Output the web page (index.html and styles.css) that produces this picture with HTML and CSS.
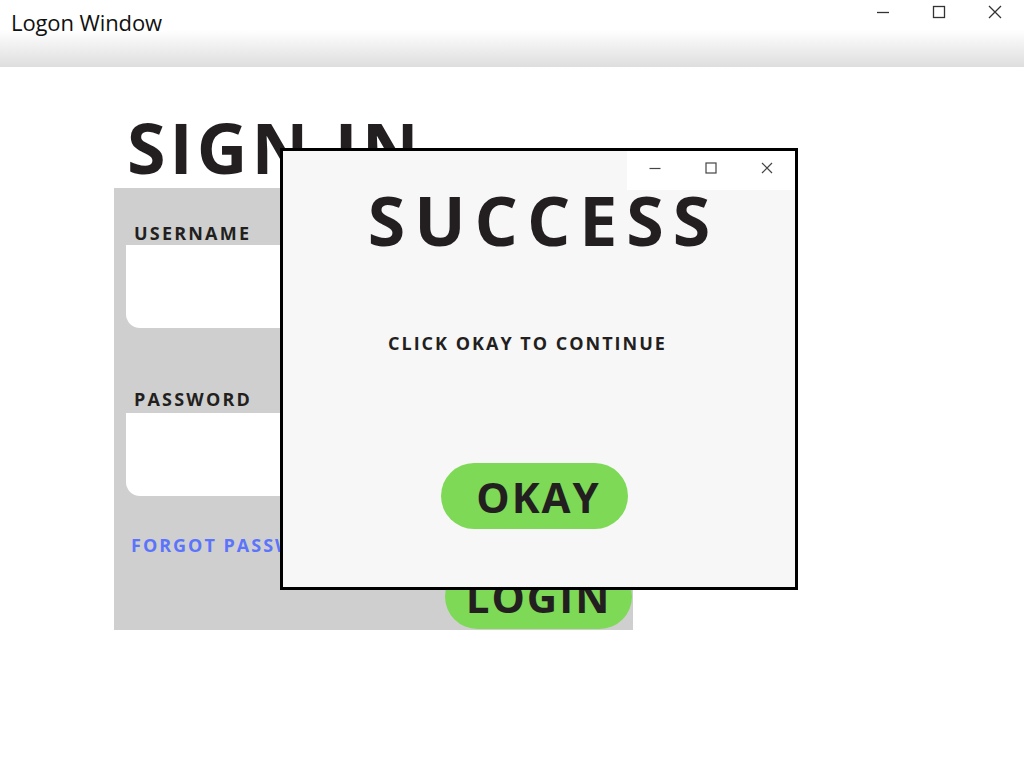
FILE: index.html
```html
<!DOCTYPE html>
<html lang="en">
<head>
<meta charset="utf-8">
<title>Logon Window</title>
<link rel="stylesheet" href="styles.css">
</head>
<body>
<div class="window">
  <header class="titlebar">
    <div class="title">Logon Window</div>
    <div class="controls">
      <span class="ctl"><svg width="14" height="14" viewBox="0 0 14 14"><path d="M1 7.5H13" stroke="#333" stroke-width="1.3" fill="none"/></svg></span>
      <span class="ctl"><svg width="14" height="14" viewBox="0 0 14 14"><rect x="1.5" y="1.5" width="11" height="11" stroke="#333" stroke-width="1.3" fill="none"/></svg></span>
      <span class="ctl"><svg width="14" height="14" viewBox="0 0 14 14"><path d="M1 1L13 13M13 1L1 13" stroke="#333" stroke-width="1.3" fill="none"/></svg></span>
    </div>
  </header>

  <main class="content">
    <h1 class="heading">SIGN IN</h1>
    <section class="panel">
      <label class="label label-user">USERNAME</label>
      <div class="field"></div>
      <label class="label label-pass">PASSWORD</label>
      <div class="field field-pass"></div>
      <a class="forgot">FORGOT PASSWORD?</a>
      <button class="btn btn-login">LOGIN</button>
    </section>
  </main>

  <div class="dialog">
    <div class="dlg-controls">
      <span class="dctl"><svg width="12" height="12" viewBox="0 0 12 12"><path d="M0.5 6.5H11.5" stroke="#444" stroke-width="1.2" fill="none"/></svg></span>
      <span class="dctl"><svg width="12" height="12" viewBox="0 0 12 12"><rect x="1" y="1" width="10" height="10" stroke="#444" stroke-width="1.2" fill="none"/></svg></span>
      <span class="dctl"><svg width="12" height="12" viewBox="0 0 12 12"><path d="M1 1L11 11M11 1L1 11" stroke="#444" stroke-width="1.2" fill="none"/></svg></span>
    </div>
    <h2 class="dlg-title">SUCCESS</h2>
    <p class="dlg-text">CLICK OKAY TO CONTINUE</p>
    <button class="btn btn-okay">OKAY</button>
  </div>
</div>
</body>
</html>
```

FILE: styles.css
```css
* { box-sizing: border-box; }

html, body {
  margin: 0;
  padding: 0;
  background: #ffffff;
}

body {
  font-family: "Open Sans", "Liberation Sans", sans-serif;
  color: #231f20;
  width: 1024px;
  height: 768px;
  overflow: hidden;
}

.window {
  position: relative;
  width: 1024px;
  height: 768px;
}

.titlebar {
  height: 67px;
  display: flex;
  justify-content: space-between;
  align-items: flex-start;
  background: linear-gradient(to bottom, #ffffff 0px, #ffffff 30px, #f1f1f1 45px, #dedede 67px);
}

.title {
  font-size: 22px;
  line-height: 26px;
  padding: 9px 0 0 11px;
  color: #111;
  letter-spacing: -0.1px;
}

.controls {
  display: flex;
  padding: 5px 1px 0 0;
}

.ctl {
  width: 56px;
  height: 14px;
  display: flex;
  justify-content: center;
}

.content {
  padding-left: 114px;
}

.heading {
  margin: 0;
  padding: 45px 0 0 13px;
  font-size: 70px;
  line-height: 70px;
  height: 121px;
  font-weight: 700;
  letter-spacing: 4px;
}

.panel {
  width: 519px;
  height: 442px;
  background: #cfcfcf;
  display: flex;
  flex-direction: column;
  padding: 36px 13px 1px 12px;
}

.label {
  display: block;
  font-size: 18px;
  line-height: 18px;
  font-weight: 700;
  letter-spacing: 2.2px;
  padding-left: 8px;
  height: 18px;
}

.label-pass {
  margin-top: 62px;
}

.field {
  margin-top: 3px;
  height: 83px;
  background: #ffffff;
  border-bottom-left-radius: 14px;
}

.field-pass {
  margin-top: 5px;
}

.forgot {
  margin-top: 40px;
  padding-left: 5px;
  font-size: 18px;
  line-height: 18px;
  font-weight: 700;
  letter-spacing: 2px;
  color: #5b74fb;
}

.btn {
  border: none;
  background: #7ed957;
  border-radius: 33px;
  font-family: "Open Sans", "Liberation Sans", sans-serif;
  font-weight: 700;
  color: #231f20;
  font-size: 42px;
  letter-spacing: 2px;
  padding: 0;
  display: flex;
  align-items: center;
  justify-content: center;
}

.btn-login {
  margin-top: 10px;
  align-self: flex-end;
  margin-right: -12px;
  width: 187px;
  height: 65px;
}

.dialog {
  position: absolute;
  left: 280px;
  top: 148px;
  width: 518px;
  height: 442px;
  border: 3px solid #000;
  background: #f7f7f7;
  display: flex;
  flex-direction: column;
}

.dlg-controls {
  position: absolute;
  right: 0;
  top: 0;
  width: 168px;
  height: 39px;
  background: #ffffff;
  display: flex;
  align-items: flex-start;
  padding-top: 11px;
}

.dctl {
  width: 56px;
  height: 12px;
  display: flex;
  justify-content: center;
}

.dlg-title {
  margin: 0;
  padding-top: 35px;
  text-align: center;
  font-size: 68px;
  line-height: 68px;
  font-weight: 700;
  letter-spacing: 9px;
  padding-left: 9px;
}

.dlg-text {
  margin: 80px 0 0 105px;
  font-size: 18px;
  line-height: 18px;
  font-weight: 700;
  letter-spacing: 2px;
}

.btn-okay {
  margin: 111px 0 0 158px;
  width: 187px;
  height: 66px;
  padding-left: 8px;
}
```
